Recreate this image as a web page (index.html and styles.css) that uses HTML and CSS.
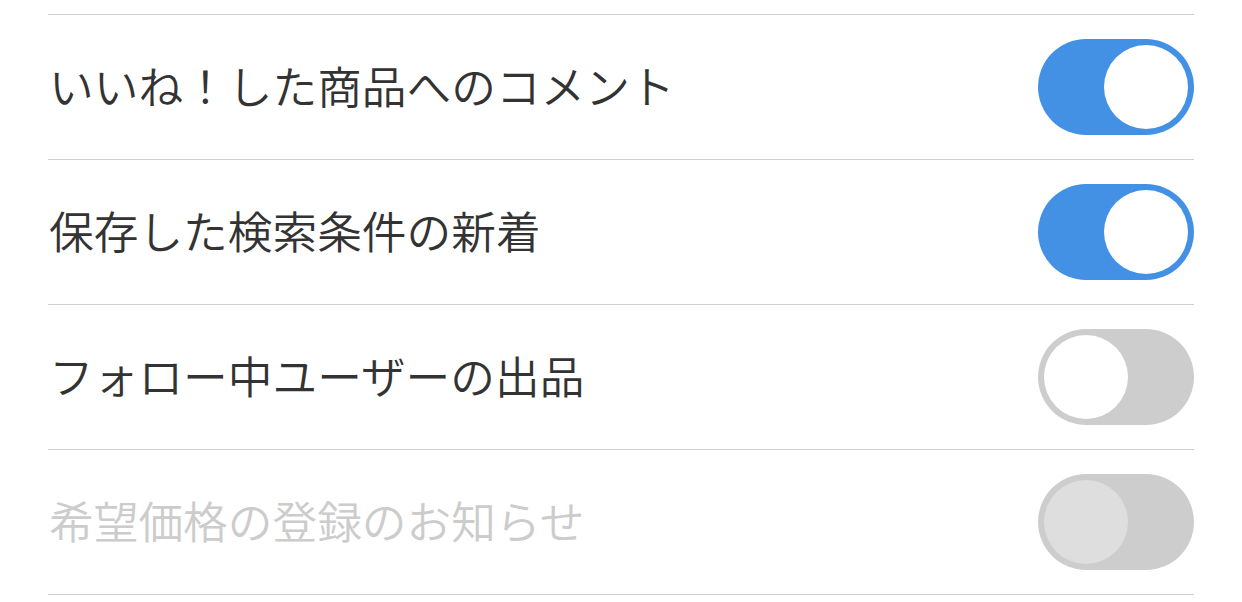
FILE: index.html
```html
<!DOCTYPE html>
<html>
<head>
  <meta charset="utf-8">
  <link rel="stylesheet" href="styles.css">
</head>
<body>
  <ul class="settings-list">
    <li class="setting-row">
      <span class="setting-label">いいね！した商品へのコメント</span>
      <span class="toggle on"><span class="knob"></span></span>
    </li>
    <li class="setting-row">
      <span class="setting-label">保存した検索条件の新着</span>
      <span class="toggle on"><span class="knob"></span></span>
    </li>
    <li class="setting-row">
      <span class="setting-label">フォロー中ユーザーの出品</span>
      <span class="toggle"><span class="knob"></span></span>
    </li>
    <li class="setting-row disabled">
      <span class="setting-label">希望価格の登録のお知らせ</span>
      <span class="toggle"><span class="knob"></span></span>
    </li>
  </ul>
</body>
</html>
```

FILE: styles.css
```css
body { margin: 0; background: #fff; font-family: "Noto Sans CJK JP", "Noto Sans", sans-serif; }
.settings-list { list-style: none; margin: 0 48px; padding: 14px 0 0; }
.setting-row { display: flex; align-items: center; justify-content: space-between; height: 144px; border-bottom: 1px solid #cfcfcf; }
.setting-row:first-child { border-top: 1px solid #cfcfcf; }
.setting-label { font-size: 44.7px; line-height: 1; color: #333; padding: 0 0 4px 1px; font-weight: 350; }
.disabled .setting-label { color: #ccc; }
.toggle { box-sizing: border-box; display: flex; justify-content: flex-start; width: 156px; height: 96px; padding: 6px; border-radius: 48px; background: #cdcdcd; }
.toggle.on { justify-content: flex-end; background: #4391e5; }
.knob { width: 84px; height: 84px; border-radius: 50%; background: #fff; }
.disabled .knob { background: #dedede; }
```
